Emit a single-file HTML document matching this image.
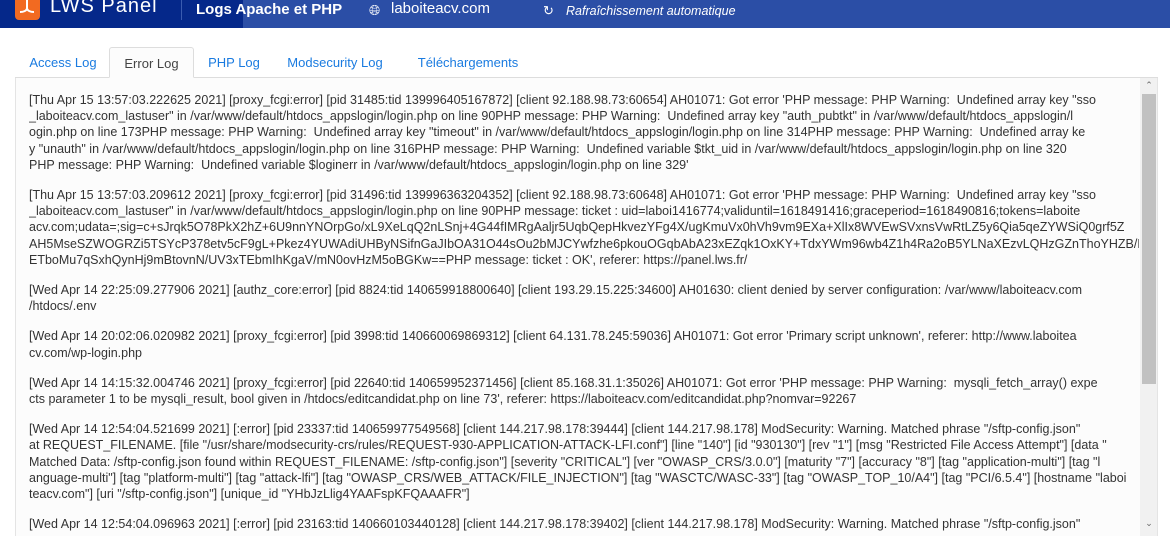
<!DOCTYPE html>
<html><head><meta charset="utf-8"><style>
*{margin:0;padding:0;box-sizing:border-box}
html,body{width:1170px;height:536px;overflow:hidden}
body{background:#fff;font-family:"Liberation Sans",sans-serif;position:relative}
.hdr{position:absolute;left:0;top:0;width:1170px;height:28px;background:#2b4ea6}
.hdr .l{position:absolute;left:0;top:0;width:243px;height:28px;background:#05288a}
.logo{position:absolute;left:15px;top:-4px;width:25px;height:24px;background:#f26a21;border-radius:0 0 4px 4px}
.t{position:absolute;color:#fff;top:0;font-size:16px;line-height:18px}
.sep{position:absolute;left:181px;top:0;width:1px;height:20px;background:#3a5bb0}
.tabs{position:absolute;top:47px;left:15px;height:31px;width:1143px;border-bottom:1px solid #ddd}
.tab{position:absolute;top:0;height:31px;font-size:13px;line-height:32px;color:#1a7be0;text-align:center}
.tab.a{border:1px solid #ddd;border-bottom:1px solid #fcfcfc;background:#fcfcfc;color:#444;border-radius:3px 3px 0 0}
.box{position:absolute;left:15px;top:78px;width:1143px;height:460px;background:#fcfcfc;border:1px solid #e4e4e4;border-top:none;overflow:hidden}
.log{position:absolute;left:13px;top:14px;width:1110px;overflow:hidden;font-size:12.5px;line-height:16.2px;color:#333;white-space:nowrap}
.log p{margin-bottom:14px}
.sb{position:absolute;left:1124px;top:0;width:17px;height:458px;background:#f1f1f1}
.th{position:absolute;left:1126px;top:16px;width:14px;height:290px;background:#c1c1c1}
.ar{position:absolute;left:1126px;width:14px;font-size:9px;color:#666;text-align:center}
</style></head><body>
<div class="hdr"><div class="l"></div>
<div class="logo"><svg width="25" height="24" viewBox="0 0 25 24"><path d="M12 4v8c0 3-4 4-7 4M12 12c0 3 4 4 7 4" stroke="#fff" stroke-width="2" fill="none"/></svg></div>
<div class="t" style="left:50px;font-size:20px;letter-spacing:1px;top:-3px">LWS Panel</div>
<div class="sep"></div>
<div class="t" style="left:196px;font-weight:bold;font-size:15px;top:1px">Logs Apache et PHP</div>
<div class="t" style="left:369px;font-size:14px;top:1px">&#x1F310;&#xFE0E;</div>
<div class="t" style="left:391px;font-size:15px;top:0">laboiteacv.com</div>
<div class="t" style="left:543px;font-size:13px;top:2px">&#x21BB;</div>
<div class="t" style="left:566px;font-size:12.5px;font-style:italic;top:2px">Rafraîchissement automatique</div>
</div>
<div class="tabs">
<div class="tab" style="left:2px;width:92px">Access Log</div>
<div class="tab a" style="left:94px;width:85px">Error Log</div>
<div class="tab" style="left:180px;width:78px">PHP Log</div>
<div class="tab" style="left:262px;width:116px">Modsecurity Log</div>
<div class="tab" style="left:388px;width:130px">Téléchargements</div>
</div>
<div class="box">
<div class="log">
<p>[Thu Apr 15 13:57:03.222625 2021] [proxy_fcgi:error] [pid 31485:tid 139996405167872] [client 92.188.98.73:60654] AH01071: Got error 'PHP message: PHP Warning:&nbsp; Undefined array key "sso<br>_laboiteacv.com_lastuser" in /var/www/default/htdocs_appslogin/login.php on line 90PHP message: PHP Warning:&nbsp; Undefined array key "auth_pubtkt" in /var/www/default/htdocs_appslogin/l<br>ogin.php on line 173PHP message: PHP Warning:&nbsp; Undefined array key "timeout" in /var/www/default/htdocs_appslogin/login.php on line 314PHP message: PHP Warning:&nbsp; Undefined array ke<br>y "unauth" in /var/www/default/htdocs_appslogin/login.php on line 316PHP message: PHP Warning:&nbsp; Undefined variable $tkt_uid in /var/www/default/htdocs_appslogin/login.php on line 320<br>PHP message: PHP Warning:&nbsp; Undefined variable $loginerr in /var/www/default/htdocs_appslogin/login.php on line 329'</p>
<p>[Thu Apr 15 13:57:03.209612 2021] [proxy_fcgi:error] [pid 31496:tid 139996363204352] [client 92.188.98.73:60648] AH01071: Got error 'PHP message: PHP Warning:&nbsp; Undefined array key "sso<br>_laboiteacv.com_lastuser" in /var/www/default/htdocs_appslogin/login.php on line 90PHP message: ticket : uid=laboi1416774;validuntil=1618491416;graceperiod=1618490816;tokens=laboite<br>acv.com;udata=;sig=c+sJrqk5O78PkX2hZ+6U9nnYNOrpGo/xL9XeLqQ2nLSnj+4G44fIMRgAaljr5UqbQepHkvezYFg4X/ugKmuVx0hVh9vm9EXa+XlIx8WVEwSVxnsVwRtLZ5y6Qia5qeZYWSiQ0grf5Z<br>AH5MseSZWOGRZi5TSYcP378etv5cF9gL+Pkez4YUWAdiUHByNSifnGaJIbOA31O44sOu2bMJCYwfzhe6pkouOGqbAbA23xEZqk1OxKY+TdxYWm96wb4Z1h4Ra2oB5YLNaXEzvLQHzGZnThoYHZB/R<br>ETboMu7qSxhQynHj9mBtovnN/UV3xTEbmIhKgaV/mN0ovHzM5oBGKw==PHP message: ticket : OK', referer: https://panel.lws.fr/</p>
<p>[Wed Apr 14 22:25:09.277906 2021] [authz_core:error] [pid 8824:tid 140659918800640] [client 193.29.15.225:34600] AH01630: client denied by server configuration: /var/www/laboiteacv.com<br>/htdocs/.env</p>
<p>[Wed Apr 14 20:02:06.020982 2021] [proxy_fcgi:error] [pid 3998:tid 140660069869312] [client 64.131.78.245:59036] AH01071: Got error 'Primary script unknown', referer: http://www.laboitea<br>cv.com/wp-login.php</p>
<p>[Wed Apr 14 14:15:32.004746 2021] [proxy_fcgi:error] [pid 22640:tid 140659952371456] [client 85.168.31.1:35026] AH01071: Got error 'PHP message: PHP Warning:&nbsp; mysqli_fetch_array() expe<br>cts parameter 1 to be mysqli_result, bool given in /htdocs/editcandidat.php on line 73', referer: https://laboiteacv.com/editcandidat.php?nomvar=92267</p>
<p>[Wed Apr 14 12:54:04.521699 2021] [:error] [pid 23337:tid 140659977549568] [client 144.217.98.178:39444] [client 144.217.98.178] ModSecurity: Warning. Matched phrase "/sftp-config.json"<br>at REQUEST_FILENAME. [file "/usr/share/modsecurity-crs/rules/REQUEST-930-APPLICATION-ATTACK-LFI.conf"] [line "140"] [id "930130"] [rev "1"] [msg "Restricted File Access Attempt"] [data "<br>Matched Data: /sftp-config.json found within REQUEST_FILENAME: /sftp-config.json"] [severity "CRITICAL"] [ver "OWASP_CRS/3.0.0"] [maturity "7"] [accuracy "8"] [tag "application-multi"] [tag "l<br>anguage-multi"] [tag "platform-multi"] [tag "attack-lfi"] [tag "OWASP_CRS/WEB_ATTACK/FILE_INJECTION"] [tag "WASCTC/WASC-33"] [tag "OWASP_TOP_10/A4"] [tag "PCI/6.5.4"] [hostname "laboi<br>teacv.com"] [uri "/sftp-config.json"] [unique_id "YHbJzLlig4YAAFspKFQAAAFR"]</p>
<p>[Wed Apr 14 12:54:04.096963 2021] [:error] [pid 23163:tid 140660103440128] [client 144.217.98.178:39402] [client 144.217.98.178] ModSecurity: Warning. Matched phrase "/sftp-config.json"</p>
</div>
<div class="sb"></div><div class="th"></div>
<div class="ar" style="top:2px">&#x2303;</div>
<div class="ar" style="top:440px">&#x2304;</div>
</div>
</body></html>
